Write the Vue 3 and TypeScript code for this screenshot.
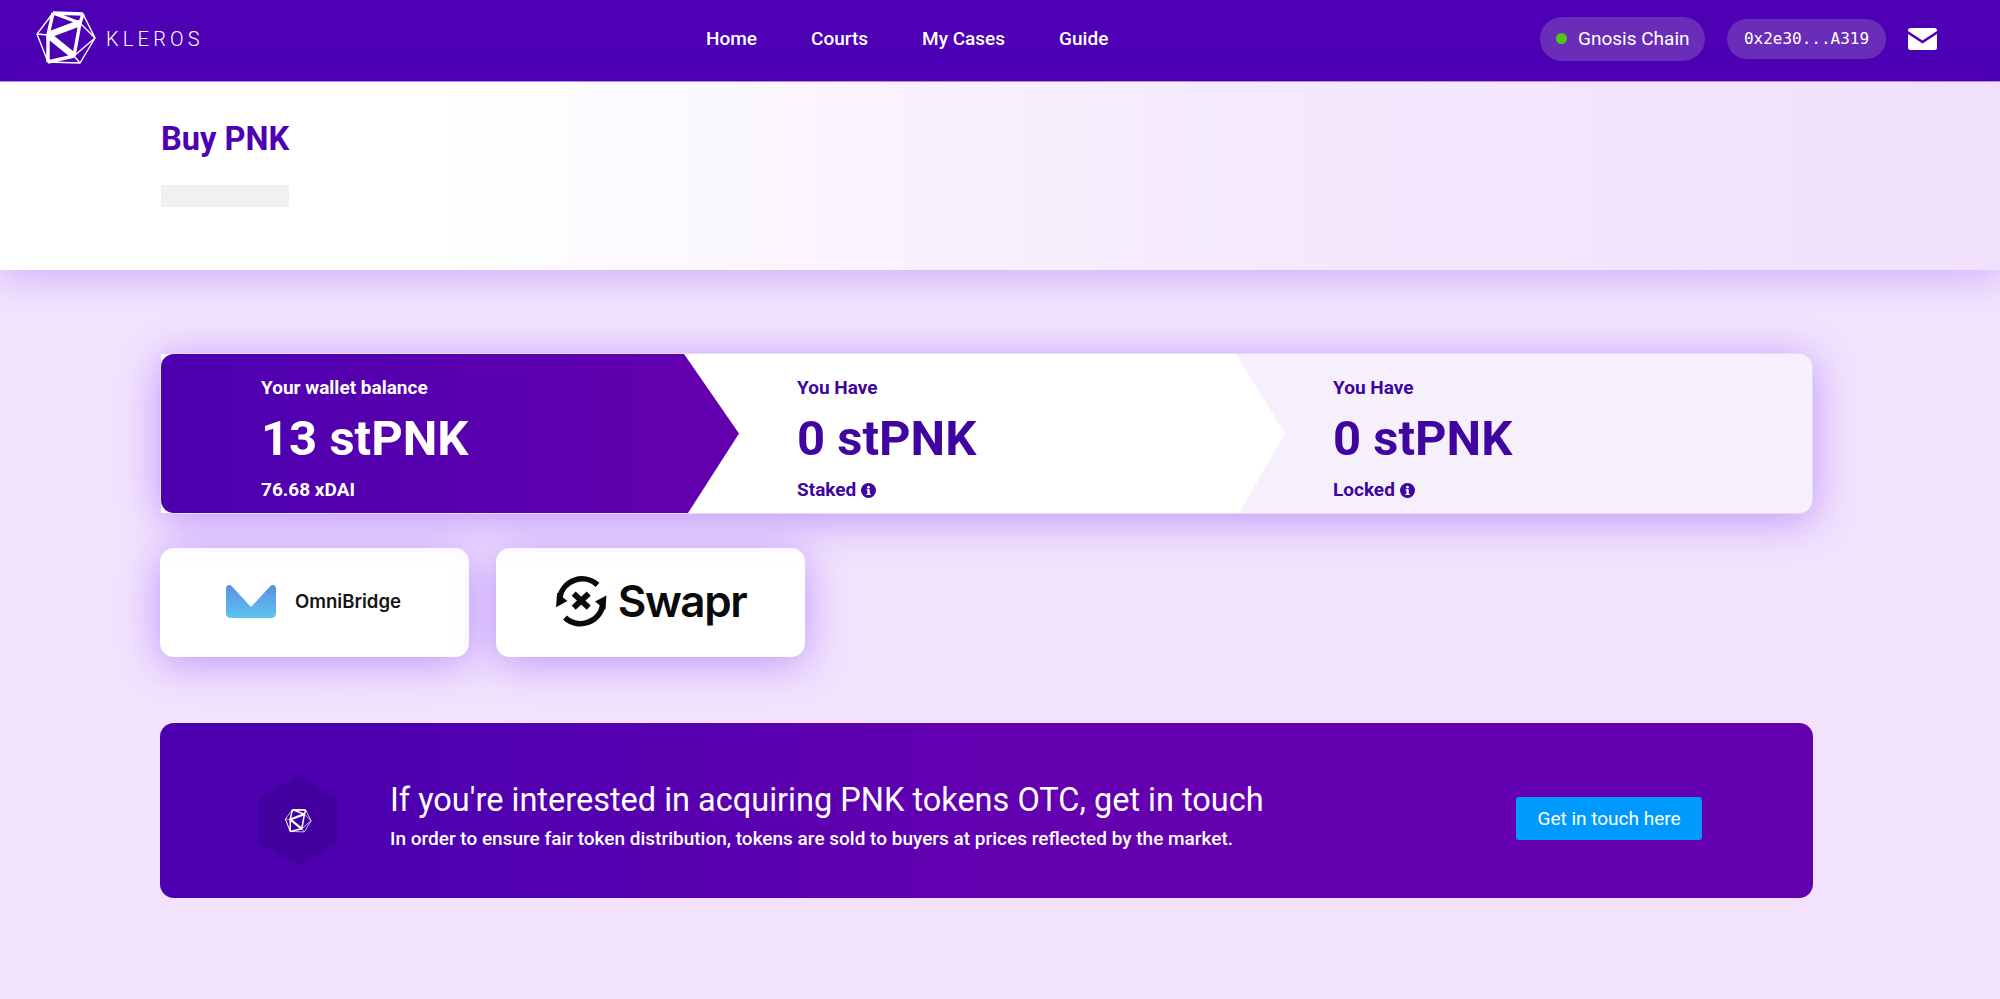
<script setup lang="ts">
const links = ['Home', 'Courts', 'My Cases', 'Guide']

const steps = [
  { top: 'Your wallet balance', value: '13 stPNK', bottom: '76.68 xDAI', info: false },
  { top: 'You Have', value: '0 stPNK', bottom: 'Staked', info: true },
  { top: 'You Have', value: '0 stPNK', bottom: 'Locked', info: true },
]

// edges of the kleros icosahedron, shared by both logo sizes
const thin = 'M53 13 L83 14 L95 38 L80 63 L48 62 L37 34 Z M37 34 L48 35 M37 34 L48 62 M80 23 L95 38 M74 56 L95 38 M74 56 L80 63'
const mid = 'M53 13 L48 35 L48 62 M80 23 L74 56 M53 13 L80 23 L83 14 M48 62 L74 56 M53 13 L83 14'
const thick = 'M48 35 L80 23 M48 35 L74 56'
</script>

<template>
  <div class="page">
    <header class="nav">
      <div class="brand">
        <svg class="logo" viewBox="34 10 63 57">
          <path :d="thin" fill="none" stroke="#fff" stroke-width="1.4" />
          <path :d="mid" fill="none" stroke="#fff" stroke-width="3.4" stroke-linejoin="round" />
          <path :d="thick" fill="none" stroke="#fff" stroke-width="6.5" />
        </svg>
        <span class="wordmark">KLEROS</span>
      </div>
      <nav class="links">
        <a v-for="l in links" :key="l">{{ l }}</a>
      </nav>
      <div class="account">
        <div class="pill chain"><i class="dot"></i>Gnosis Chain</div>
        <div class="pill address">0x2e30...A319</div>
        <svg class="mail" viewBox="0 0 29 22">
          <path d="M2.5 0 H26.5 A2.5 2.5 0 0 1 29 2.5 V3 L14.5 12.5 L0 3 V2.5 A2.5 2.5 0 0 1 2.5 0 Z" fill="#fff" />
          <path d="M0 6 L14.5 15.5 L29 6 V19.5 A2.5 2.5 0 0 1 26.5 22 H2.5 A2.5 2.5 0 0 1 0 19.5 Z" fill="#fff" />
        </svg>
      </div>
    </header>

    <section class="hero">
      <h1>Buy PNK</h1>
      <div class="skeleton"></div>
    </section>

    <main class="content">
      <div class="balance">
        <div class="shape shape-white"></div>
        <div class="shape shape-purple"></div>
        <div v-for="(s, i) in steps" :key="i" class="step" :class="{ first: i === 0 }">
          <div class="step-top">{{ s.top }}</div>
          <div class="step-value">{{ s.value }}</div>
          <div class="step-bottom">
            {{ s.bottom }}
            <svg v-if="s.info" class="info" viewBox="0 0 14 14">
              <circle cx="7" cy="7" r="7" fill="#4004a1" />
              <rect x="6" y="5.9" width="2.2" height="5.2" fill="#fff" />
              <rect x="5.1" y="5.9" width="2" height="1" fill="#fff" />
              <rect x="5.1" y="10.2" width="4" height="1" fill="#fff" />
              <circle cx="7" cy="3.9" r="1.25" fill="#fff" />
            </svg>
          </div>
        </div>
      </div>

      <div class="exchanges">
        <a class="exchange">
          <svg class="omni" viewBox="0 0 50 33">
            <defs>
              <linearGradient id="omni-fill" x1="0" y1="0" x2="0" y2="1">
                <stop offset="0" stop-color="#5c8ce6" />
                <stop offset="1" stop-color="#5cc6ee" />
              </linearGradient>
            </defs>
            <path d="M0 4 Q0 0 3.5 0 Q5 0 6 1.5 L25 22 L44 1.5 Q45 0 46.5 0 Q50 0 50 4 V28 Q50 33 45 33 H5 Q0 33 0 28 Z" fill="url(#omni-fill)" />
          </svg>
          <span class="omni-name">OmniBridge</span>
        </a>
        <a class="exchange">
          <svg class="swapr" viewBox="0 0 53 51">
            <path d="M4.5 22 A22 22 0 0 1 41 9.5" fill="none" stroke="#0a0a0a" stroke-width="5.4" />
            <path d="M46.1 28.6 A22 22 0 0 1 9.6 41.1" fill="none" stroke="#0a0a0a" stroke-width="5.4" />
            <path d="M1 31 L2 17 L12 25 Z" fill="#0a0a0a" />
            <path d="M49.6 19.6 L48.6 33.6 L38.6 25.6 Z" fill="#0a0a0a" />
            <path d="M18 18 L32.5 31.5 M32.5 18 L18 31.5" stroke="#0a0a0a" stroke-width="5.6" />
          </svg>
          <span class="swapr-name">Swapr</span>
        </a>
      </div>

      <div class="divider"></div>

      <div class="otc">
        <div class="hex">
          <svg class="hex-logo" viewBox="34 10 63 57">
            <path :d="thin" fill="none" stroke="#fff" stroke-width="1.6" />
            <path :d="mid" fill="none" stroke="#fff" stroke-width="3.4" stroke-linejoin="round" />
            <path :d="thick" fill="none" stroke="#fff" stroke-width="5" />
          </svg>
        </div>
        <div class="otc-text">
          <div class="otc-title">If you're interested in acquiring PNK tokens OTC, get in touch</div>
          <div class="otc-sub">In order to ensure fair token distribution, tokens are sold to buyers at prices reflected by the market.</div>
        </div>
        <button class="otc-btn">Get in touch here</button>
      </div>
    </main>
  </div>
</template>

<style>
html, body {
  margin: 0;
  background: #f2e2fe;
}
</style>

<style scoped>
.page {
  min-height: 999px;
  background: #f2e2fe;
  font-family: Roboto, "Liberation Sans", sans-serif;
  overflow: hidden;
}

.nav {
  height: 82px;
  box-sizing: border-box;
  padding-bottom: 4px;
  background: #4d00b4;
  border-bottom: 1px solid #b69ae0;
  display: flex;
  align-items: center;
  color: #fff;
}

.brand {
  display: flex;
  align-items: center;
  width: 706px;
  padding-left: 34px;
  box-sizing: border-box;
}

.logo {
  width: 63px;
  height: 57px;
}

.wordmark {
  margin-left: 9px;
  font-size: 20px;
  font-weight: 300;
  letter-spacing: 4.2px;
}

.links {
  display: flex;
  gap: 54px;
  font-size: 19px;
  font-weight: 500;
}

.account {
  margin-left: auto;
  padding-right: 63px;
  display: flex;
  align-items: center;
}

.pill {
  display: flex;
  align-items: center;
  border-radius: 22px;
  background: #6a2db9;
  box-sizing: border-box;
}

.chain {
  width: 165px;
  height: 44px;
  padding-left: 16px;
  font-size: 19px;
}

.dot {
  width: 11px;
  height: 11px;
  margin-right: 11px;
  border-radius: 50%;
  background: #52c41a;
}

.address {
  width: 159px;
  height: 40px;
  margin-left: 22px;
  justify-content: center;
  font-family: "DejaVu Sans Mono", monospace;
  font-size: 16px;
}

.mail {
  width: 29px;
  height: 22px;
  margin-left: 22px;
}

.hero {
  height: 188px;
  box-sizing: border-box;
  padding: 38px 0 0 161px;
  background: linear-gradient(90deg, #fff 22%, #f4e9fd 62%, #f0e0fc 100%);
  box-shadow: 0 6px 36px rgba(90, 0, 230, 0.24);
}

.hero h1 {
  margin: 0;
  font-size: 32.6px;
  line-height: 38px;
  font-weight: 700;
  color: #4d00b4;
}

.skeleton {
  width: 128px;
  height: 22px;
  margin-top: 27px;
  background: #f1f1f1;
}

.content {
  padding: 83px 187px 0 160px;
}

.balance {
  position: relative;
  height: 161px;
  display: grid;
  grid-template-columns: 536px 536px 1fr;
  padding-left: 100px;
  border-radius: 14px;
  border: 1px solid #e4dcef;
  box-sizing: border-box;
  background: #f6f0fd;
  box-shadow: 0 6px 42px rgba(90, 0, 240, 0.34);
}

.shape {
  position: absolute;
  top: 0;
  bottom: 0;
  left: 0;
}

.shape-purple {
  width: 578px;
  border-radius: 13px 0 0 13px;
  background: linear-gradient(90deg, #4c00b0, #6400ae);
  clip-path: polygon(0 0, 523px 0, 100% 50%, 527px 100%, 0 100%);
}

.shape-white {
  width: 1124px;
  background: #fff;
  clip-path: polygon(0 0, 1075px 0, 100% 50%, 1078px 100%, 0 100%);
}

.step {
  position: relative;
  padding-top: 23px;
  color: #4004a1;
}

.step.first {
  color: #fff;
}

.step-top {
  font-size: 19px;
  line-height: 21px;
  font-weight: 700;
}

.step-value {
  margin-top: 11px;
  font-size: 49px;
  line-height: 60px;
  font-weight: 700;
}

.step-bottom {
  margin-top: 10px;
  display: flex;
  align-items: center;
  gap: 5px;
  font-size: 19px;
  line-height: 21px;
  font-weight: 700;
}

.info {
  width: 15px;
  height: 15px;
  margin-top: 2px;
}

.exchanges {
  display: flex;
  gap: 27px;
  margin-top: 34px;
}

.exchange {
  width: 309px;
  height: 109px;
  box-sizing: border-box;
  padding-bottom: 3px;
  display: flex;
  align-items: center;
  justify-content: center;
  border-radius: 14px;
  background: #fff;
  box-shadow: 0 6px 42px rgba(90, 0, 240, 0.34);
}

.omni {
  width: 50px;
  height: 33px;
  margin: 0 19px 0 -2px;
}

.omni-name {
  font-family: Inter, sans-serif;
  font-size: 18.6px;
  font-weight: 600;
  color: #151515;
}

.swapr {
  width: 55px;
  height: 53px;
  margin-right: 8px;
}

.swapr-name {
  font-family: Inter, sans-serif;
  font-size: 44px;
  font-weight: 600;
  letter-spacing: -1.4px;
  color: #0a0a0a;
}

.divider {
  height: 1px;
  margin-top: 31px;
  width: 700px;
  background: linear-gradient(90deg, #eef0e4, rgba(238, 240, 228, 0));
}

.otc {
  height: 175px;
  margin-top: 34px;
  display: flex;
  align-items: center;
  border-radius: 14px;
  background: linear-gradient(90deg, #4c00b0 12%, #6500b0 55%);
  color: #fff;
}

.hex {
  width: 78px;
  height: 90px;
  margin: 20px 0 0 99px;
  display: flex;
  align-items: center;
  justify-content: center;
  background: #42019e;
  clip-path: polygon(50% 0, 100% 25%, 100% 75%, 50% 100%, 0 75%, 0 25%);
}

.hex-logo {
  width: 28px;
  height: 26px;
}

.otc-text {
  margin: 9px 0 0 53px;
  flex: 1;
}

.otc-title {
  font-size: 32.5px;
  line-height: 38px;
}

.otc-sub {
  margin-top: 9px;
  font-size: 19px;
  line-height: 21px;
  font-weight: 500;
}

.otc-btn {
  width: 186px;
  height: 43px;
  margin: 15px 111px 0 0;
  border: none;
  border-radius: 3px;
  background: #009aff;
  color: #fff;
  font-family: inherit;
  font-size: 19px;
}
</style>
